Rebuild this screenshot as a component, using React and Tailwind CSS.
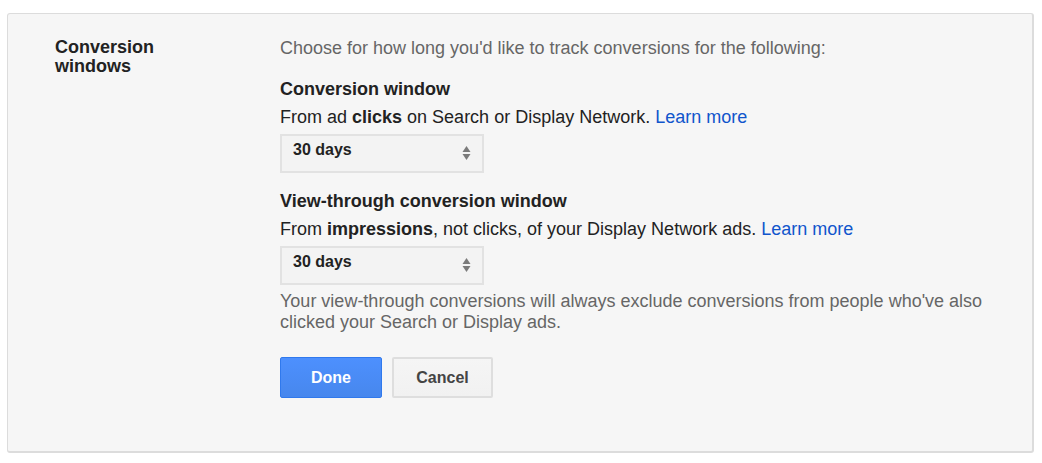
import React from 'react';

function Arrows() {
  return (
    <svg width="9" height="16" viewBox="0 0 9 16" className="text-[#7a7a7a]">
      <path d="M0.5 7 L4.5 1 L8.5 7 Z" fill="currentColor" />
      <path d="M0.5 9 L4.5 15 L8.5 9 Z" fill="currentColor" />
    </svg>
  );
}

function DaysSelect() {
  return (
    <div className="flex h-[39px] w-[204px] items-start justify-between border-2 border-[#e2e2e2] bg-[#f3f3f3] pl-[11px] pr-[11px]">
      <span className="mt-[4px] text-[16px] font-bold leading-[20px] text-[#222]">30 days</span>
      <span className="mt-[9px]">
        <Arrows />
      </span>
    </div>
  );
}

export default function App() {
  return (
    <div className="h-[463px] w-[1042px] bg-white pl-[7px] pt-[13px] font-['Liberation_Sans',Arial,sans-serif]">
      <div className="flex h-[440px] w-[1027px] rounded-[3px] border border-[#dcdcdc] border-b-2 border-r-2 bg-[#f6f6f6] pt-[24px]">
        <div className="w-[272px] shrink-0 pl-[47px]">
          <h2 className="text-[18px] font-bold leading-[19px] text-[#222]">
            Conversion
            <br />
            windows
          </h2>
        </div>

        <div className="flex flex-col text-[18px] leading-[20px]">
          <p className="text-[#666]">Choose for how long you'd like to track conversions for the following:</p>

          <h3 className="mt-[21px] text-[18px] font-bold text-[#222]">Conversion window</h3>
          <p className="mt-[8px] text-[#222]">
            From ad <b>clicks</b> on Search or Display Network.{' '}
            <a href="#" className="text-[#1155cc]">Learn more</a>
          </p>
          <div className="mt-[7px]">
            <DaysSelect />
          </div>

          <h3 className="mt-[18px] text-[18px] font-bold text-[#222]">View-through conversion window</h3>
          <p className="mt-[8px] text-[#222]">
            From <b>impressions</b>, not clicks, of your Display Network ads.{' '}
            <a href="#" className="text-[#1155cc]">Learn more</a>
          </p>
          <div className="mt-[7px]">
            <DaysSelect />
          </div>

          <p className="mt-[6px] w-[730px] leading-[21px] text-[#666]">
            Your view-through conversions will always exclude conversions from people who've also clicked your Search
            or Display ads.
          </p>

          <div className="mt-[24px] flex gap-[10px]">
            <button className="h-[41px] w-[102px] rounded-[2px] border border-[#3079ed] bg-gradient-to-b from-[#4d90fe] to-[#4787ed] text-[16px] font-bold text-white">
              Done
            </button>
            <button className="h-[41px] w-[101px] rounded-[2px] border-2 border-[#dedede] bg-gradient-to-b from-[#f5f5f5] to-[#f1f1f1] text-[16px] font-bold text-[#444]">
              Cancel
            </button>
          </div>
        </div>
      </div>
    </div>
  );
}
